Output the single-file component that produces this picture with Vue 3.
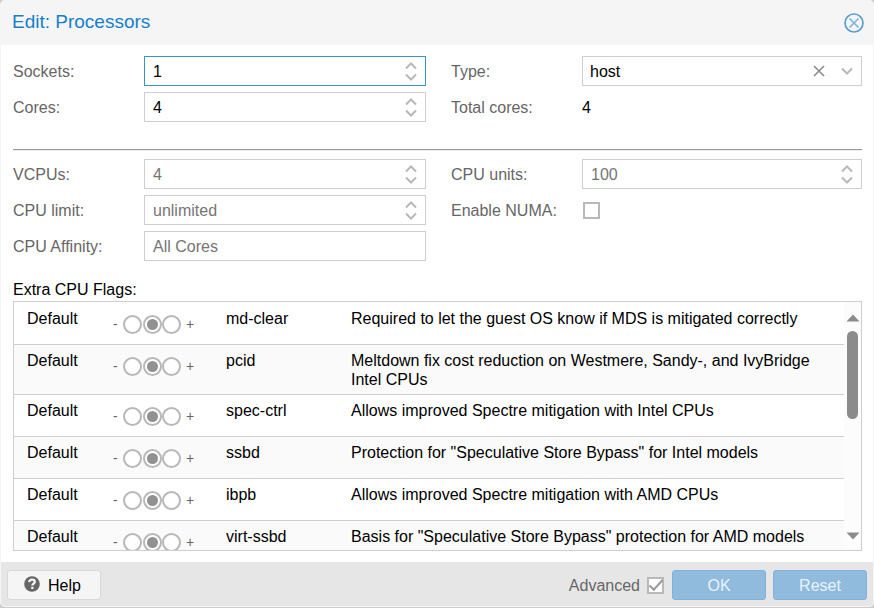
<script setup>
import { computed, reactive, ref } from 'vue'

const sockets = ref('1')
const cores = ref('4')
const vcpus = ref('')
const limit = ref('')
const affinity = ref('')
const type = ref('host')
const units = ref('')
const numa = ref(false)
const advanced = ref(true)
const total = computed(() => Number(sockets.value) * Number(cores.value))

const flags = reactive([
  { name: 'md-clear', value: '=', text: 'Required to let the guest OS know if MDS is mitigated correctly' },
  { name: 'pcid', value: '=', text: 'Meltdown fix cost reduction on Westmere, Sandy-, and IvyBridge Intel CPUs' },
  { name: 'spec-ctrl', value: '=', text: 'Allows improved Spectre mitigation with Intel CPUs' },
  { name: 'ssbd', value: '=', text: 'Protection for "Speculative Store Bypass" for Intel models' },
  { name: 'ibpb', value: '=', text: 'Allows improved Spectre mitigation with AMD CPUs' },
  { name: 'virt-ssbd', value: '=', text: 'Basis for "Speculative Store Bypass" protection for AMD models' },
])
const labels = { '-': 'Off', '=': 'Default', '+': 'On' }

const left = [
  { id: 'sockets', label: 'Sockets:', model: sockets, active: true },
  { id: 'cores', label: 'Cores:', model: cores },
]
const advancedLeft = [
  { id: 'vcpus', label: 'VCPUs:', model: vcpus, hint: '4', spin: true },
  { id: 'limit', label: 'CPU limit:', model: limit, hint: 'unlimited', spin: true },
  { id: 'affinity', label: 'CPU Affinity:', model: affinity, hint: 'All Cores' },
]
function step(model, by) {
  model.value = String(Math.max(1, (Number(model.value) || 0) + by))
}
</script>

<template>
  <form class="dialog" @submit.prevent>
    <header class="title">
      <h1>Edit: Processors</h1>
      <button type="button" class="close" aria-label="Close">
        <svg viewBox="0 0 20 20" width="20" height="20" fill="none">
          <circle cx="10" cy="10" r="9" stroke="#5a9fd4" stroke-width="1.7" />
          <path d="M5.500 5.500l9 9M14.500 5.500l-9 9" stroke="#7fb4e2" stroke-width="1.700" />
        </svg>
      </button>
    </header>

    <main class="body">
      <div class="columns">
        <div class="column">
          <div v-for="f in left" :key="f.id" class="field">
            <label :for="f.id">{{ f.label }}</label>
            <div class="box" :class="{ active: f.active }">
              <input :id="f.id" v-model="f.model.value" type="text" inputmode="numeric" />
              <div class="spin">
                <button type="button" aria-label="Increase" @click="step(f.model, 1)"><svg viewBox="0 0 12 8" width="12" height="8"><path d="M1 6.5l5-5 5 5" /></svg></button>
                <button type="button" aria-label="Decrease" @click="step(f.model, -1)"><svg viewBox="0 0 12 8" width="12" height="8"><path d="M1 1.5l5 5 5-5" /></svg></button>
              </div>
            </div>
          </div>
        </div>
        <div class="column">
          <div class="field">
            <label for="type">Type:</label>
            <div class="box">
              <select id="type" v-model="type">
                <option>host</option>
                <option>kvm64</option>
              </select>
              <button type="button" class="clear" aria-label="Clear">
                <svg viewBox="0 0 12 12" width="12" height="12"><path d="M1 1l10 10M11 1L1 11" /></svg>
              </button>
              <svg class="arrow" viewBox="0 0 12 8" width="12" height="8"><path d="M1 1.5l5 5 5-5" /></svg>
            </div>
          </div>
          <div class="field">
            <label for="total">Total cores:</label>
            <output id="total">{{ total }}</output>
          </div>
        </div>
      </div>

      <hr />

      <div class="columns">
        <div class="column">
          <div v-for="f in advancedLeft" :key="f.id" class="field">
            <label :for="f.id">{{ f.label }}</label>
            <div class="box">
              <input :id="f.id" v-model="f.model.value" type="text" :placeholder="f.hint" />
              <div v-if="f.spin" class="spin">
                <button type="button" aria-label="Increase" @click="step(f.model, 1)"><svg viewBox="0 0 12 8" width="12" height="8"><path d="M1 6.5l5-5 5 5" /></svg></button>
                <button type="button" aria-label="Decrease" @click="step(f.model, -1)"><svg viewBox="0 0 12 8" width="12" height="8"><path d="M1 1.5l5 5 5-5" /></svg></button>
              </div>
            </div>
          </div>
        </div>
        <div class="column">
          <div class="field">
            <label for="units">CPU units:</label>
            <div class="box">
              <input id="units" v-model="units" type="text" inputmode="numeric" placeholder="100" />
              <div class="spin">
                <button type="button" aria-label="Increase"><svg viewBox="0 0 12 8" width="12" height="8"><path d="M1 6.5l5-5 5 5" /></svg></button>
                <button type="button" aria-label="Decrease"><svg viewBox="0 0 12 8" width="12" height="8"><path d="M1 1.5l5 5 5-5" /></svg></button>
              </div>
            </div>
          </div>
          <div class="field">
            <label for="numa">Enable NUMA:</label>
            <input id="numa" v-model="numa" type="checkbox" class="check" />
          </div>
        </div>
      </div>

      <h2>Extra CPU Flags:</h2>
      <div class="grid">
        <div class="scroller">
          <table>
            <tbody>
              <tr v-for="flag in flags" :key="flag.name">
                <td class="state">{{ labels[flag.value] }}</td>
                <td class="choice">
                  <div class="radios">
                    <span class="minus">-</span>
                    <input v-for="v in ['-', '=', '+']" :key="v" v-model="flag.value" type="radio" :name="flag.name" :value="v" :aria-label="flag.name + ' ' + labels[v]" />
                    <span class="plus">+</span>
                  </div>
                </td>
                <td class="name">{{ flag.name }}</td>
                <td class="text">{{ flag.text }}</td>
              </tr>
            </tbody>
          </table>
        </div>
        <div class="scrollbar" aria-hidden="true">
          <svg viewBox="0 0 14 8" width="14" height="8"><path d="M7 0.5L13.5 7.5H0.5z" /></svg>
          <div class="track"><div class="thumb"></div></div>
          <svg viewBox="0 0 14 8" width="14" height="8"><path d="M7 7.5L0.5 0.5h13z" /></svg>
        </div>
      </div>
    </main>

    <footer class="footer">
      <button type="button" class="help">
        <svg viewBox="0 0 16 16" width="16" height="16">
          <circle cx="8" cy="8" r="7.8" fill="#666" />
          <path d="M5.200 6.100C5.300 4.400 6.500 3.600 8.100 3.600c1.600 0 2.700.9 2.700 2.200 0 1.800-2.400 1.900-2.400 3.700" fill="none" stroke="#f5f5f5" stroke-width="2.300" />
          <path d="M7.200 10.700h2.300v2.300H7.200z" fill="#f5f5f5" />
        </svg>
        Help
      </button>
      <span class="spacer"></span>
      <label for="advanced">Advanced</label>
      <input id="advanced" v-model="advanced" type="checkbox" class="check" />
      <div class="actions">
        <button type="submit" class="primary" disabled>OK</button>
        <button type="reset" class="primary" disabled>Reset</button>
      </div>
    </footer>
  </form>
</template>

<style>
body {
  background: #ccc;
}
</style>

<style scoped>
* {
  box-sizing: border-box;
}
.dialog {
  display: flex;
  flex-direction: column;
  height: calc(100vh - 1px);
  border: 1px solid #f5f5f5;
  border-top: 0;
  border-radius: 5px;
  overflow: hidden;
  background: #fff;
  color: #000;
  font: 16px/19px "Liberation Sans", Arial, sans-serif;
}
button,
input,
select {
  margin: 0;
  padding: 0;
  border: 0;
  background: none;
  color: inherit;
  font: inherit;
}
svg {
  display: block;
}
.title {
  display: flex;
  flex: none;
  align-items: center;
  justify-content: space-between;
  height: 45px;
  padding: 0 9px 0 11px;
  background: #f5f5f5;
}
h1 {
  margin: 0 0 2px;
  color: #157fcc;
  font-size: 19px;
  font-weight: 400;
  line-height: 22px;
}
.body {
  display: flex;
  flex: 1;
  flex-direction: column;
  min-height: 0;
  padding: 11px 11px 11px 12px;
}
.columns {
  display: grid;
  grid-template-columns: 413fr 411fr;
  gap: 25px;
}
.column {
  display: flex;
  flex-direction: column;
  gap: 6px;
}
.field {
  display: flex;
  align-items: center;
  height: 30px;
}
.field label {
  flex: none;
  width: 131px;
  color: #666;
}
.box {
  display: flex;
  flex: 1;
  align-items: center;
  height: 30px;
  min-width: 0;
  border: 1px solid #cfcfcf;
}
.box.active {
  border-color: #3892d3;
}
.box input,
.box select {
  flex: 1;
  min-width: 0;
  height: 28px;
  padding: 0 8px;
  outline: 0;
  appearance: none;
}
.box input {
  padding-top: 2px;
}
.box select {
  padding: 0 7px;
}
.box input::placeholder {
  color: #757575;
  opacity: 1;
}
.spin {
  display: flex;
  flex-direction: column;
  gap: 3px;
  padding-right: 8px;
}
.box path {
  fill: none;
  stroke: #b8b8b8;
  stroke-width: 2;
}
.box .clear path {
  stroke: #8c8c8c;
  stroke-width: 1.6;
}
.arrow {
  margin: 0 8px 0 16px;
}
hr {
  width: 100%;
  height: 2px;
  margin: 27px 0 8px;
  border: 0;
  border-top: 1px solid #999;
  border-bottom: 1px solid #eee;
}
.check {
  display: grid;
  flex: none;
  place-content: center;
  width: 17px;
  height: 17px;
  margin: 0 1px;
  border: 2px solid #b9b9b9;
  background: #fff;
  appearance: none;
}
.check:checked::before {
  content: "";
  width: 12px;
  height: 5px;
  border: solid #999;
  border-width: 0 0 2px 2px;
  transform: translateY(-2px) rotate(-48deg);
}
h2 {
  margin: 19px 0 2px;
  font-size: 16px;
  font-weight: 400;
  line-height: 19px;
}
.grid {
  display: flex;
  flex: 1;
  min-height: 0;
  border: 1px solid #cfcfcf;
}
.scroller {
  flex: 1;
  overflow: auto;
  padding-top: 1px;
  scrollbar-width: none;
}
table {
  width: 100%;
  border-collapse: separate;
  border-spacing: 0;
  table-layout: fixed;
}
td {
  height: 42px;
  padding: 6px 0 5px;
  border-bottom: 1px solid #cfcfcf;
  vertical-align: top;
}
tr:nth-child(even) td {
  background: #fafafa;
}
.state {
  width: 99px;
  padding-left: 13px;
}
.choice {
  width: 113px;
}
.name {
  width: 125px;
}
.text {
  padding-right: 12px;
}
.radios {
  display: flex;
  align-items: center;
  height: 19px;
  margin-top: 6px;
  color: #666;
  font-size: 14px;
}
.minus {
  width: 10px;
}
.plus {
  padding-left: 5px;
}
.radios input {
  display: grid;
  place-content: center;
  width: 19px;
  height: 19px;
  border: 2px solid #b8b8b8;
  border-radius: 50%;
  background: #fff;
  appearance: none;
}
.radios input:checked {
  margin-left: 1px;
}
.radios input:checked::before {
  content: "";
  width: 11px;
  height: 11px;
  border-radius: 50%;
  background: #919191;
}
.scrollbar {
  display: flex;
  flex: none;
  flex-direction: column;
  align-items: center;
  width: 17px;
  padding: 12px 0 10px;
  background: #fcfcfc;
}
.scrollbar path {
  fill: #8b8b8b;
}
.track {
  flex: 1;
  padding-top: 9px;
}
.thumb {
  width: 11px;
  height: 88px;
  border-radius: 6px;
  background: #8b8b8b;
}
.footer {
  display: flex;
  flex: none;
  align-items: center;
  height: 44px;
  padding: 2px 6px 0;
  background: #e6e6e6;
  color: #666;
}
.footer button {
  height: 30px;
  width: 94px;
  border-radius: 3px;
}
.help {
  display: flex;
  align-items: center;
  gap: 8px;
  padding-left: 16px;
  border: 1px solid #d8d8d8;
  background: #f5f5f5;
  color: #000;
}
.help svg {
  margin-bottom: 2px;
}
.spacer {
  flex: 1;
}
.footer .check {
  margin-left: 7px;
}
.actions {
  display: flex;
  gap: 7px;
  margin-left: 7px;
}
.primary {
  border: 1px solid #7fb3da;
  background: #90bbdd;
  color: #e8f2fa;
}
</style>
